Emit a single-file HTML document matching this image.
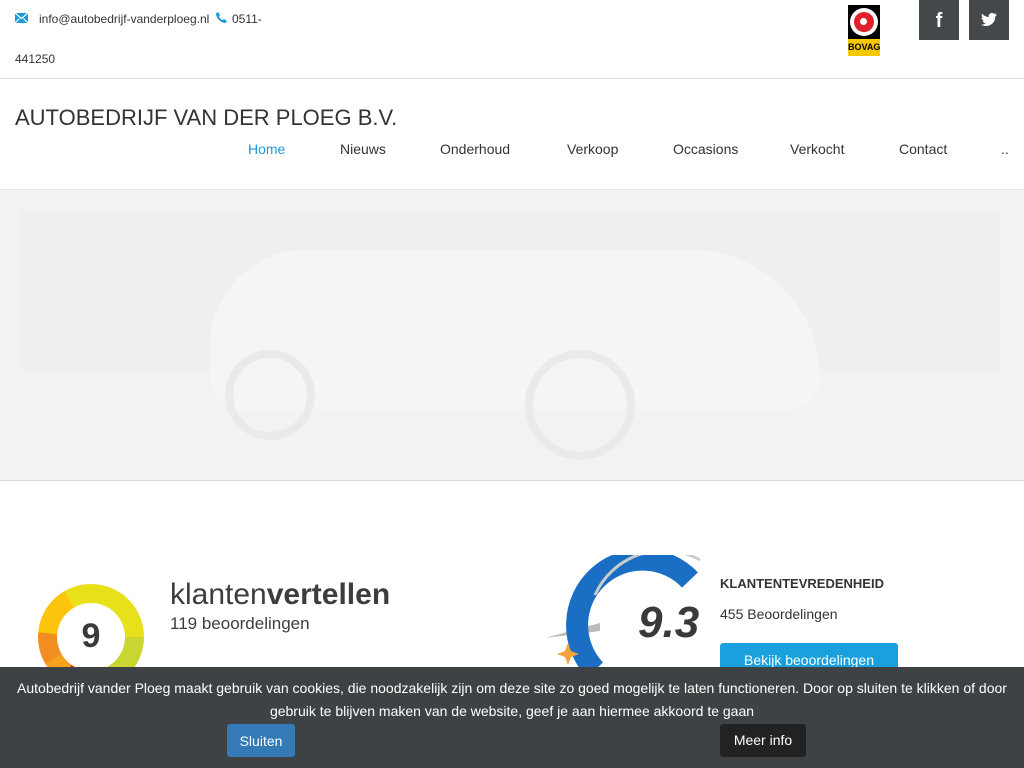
<!DOCTYPE html>
<html><head><meta charset="utf-8"><style>
*{margin:0;padding:0;box-sizing:border-box}
body{width:1024px;height:768px;overflow:hidden;background:#fff;font-family:"Liberation Sans",sans-serif;color:#333;position:relative}
.a{position:absolute}
.top{font-size:12px;color:#333}
.nav span{position:absolute;top:141px;font-size:14px;color:#333}
.soc{width:40px;height:40px;background:#45484b;top:0}
</style></head><body>
<svg class="a" style="left:15px;top:13px" width="13" height="10" viewBox="0 0 13 10"><rect width="13" height="10" fill="#1a9ad6"/><path d="M0 0l6.5 5.5L13 0M0 10l4.5-4.5M13 10L8.5 5.5" stroke="#fff" stroke-width="1.2" fill="none"/></svg>
<div class="a top" style="left:39px;top:12px">info@autobedrijf-vanderploeg.nl</div>
<svg class="a" style="left:215px;top:11px" width="13" height="13" viewBox="0 0 13 13"><path d="M3 1l2 3-1 1.5c.8 1.8 2 3 3.5 3.6L9 8l3 2-1.5 2C6 12 1 7 1 2.5z" fill="#1a9ad6"/></svg>
<div class="a top" style="left:232px;top:12px">0511-</div>
<div class="a top" style="left:15px;top:52px">441250</div>
<div class="a" style="left:848px;top:5px;width:32px;height:51px;background:#000"></div>
<div class="a" style="left:850px;top:8px;width:28px;height:28px;border-radius:50%;background:#fff"></div>
<div class="a" style="left:854px;top:12px;width:20px;height:20px;border-radius:50%;background:#e0202a"></div>
<div class="a" style="left:860px;top:18px;width:7px;height:7px;border-radius:50%;background:#fff"></div>
<div class="a" style="left:848px;top:39px;width:32px;height:17px;background:#f6c800;font:bold 9px 'Liberation Sans',sans-serif;color:#000;text-align:center;line-height:17px">BOVAG</div>
<div class="a soc" style="left:919px;color:#fff;font:bold 20px 'Liberation Sans',sans-serif;text-align:center;line-height:42px">f</div>
<div class="a soc" style="left:969px"><svg width="40" height="40" viewBox="0 0 40 40"><path d="M28 14.5c-.6.3-1.2.4-1.9.5.7-.4 1.2-1 1.4-1.8-.6.4-1.3.6-2.1.8a3.3 3.3 0 0 0-5.6 3C17.1 16.9 14.7 15.6 13.1 13.6c-.9 1.5-.4 3.4 1 4.4-.5 0-1-.2-1.5-.4 0 1.6 1.1 3 2.6 3.3-.5.1-1 .2-1.5.1.4 1.3 1.7 2.3 3.1 2.3A6.6 6.6 0 0 1 12 24.6c1.5.9 3.2 1.4 5 1.4 6.1 0 9.5-5.1 9.3-9.7.7-.5 1.2-1 1.7-1.8z" fill="#fff"/></svg></div>
<div class="a" style="left:0;top:78px;width:1024px;height:1px;background:#e2e2e2"></div>
<div class="a" style="left:15px;top:105px;font-size:22px;color:#333">AUTOBEDRIJF VAN DER PLOEG B.V.</div>
<div class="nav">
<span style="left:248px;color:#1a9ad6">Home</span><span style="left:340px">Nieuws</span><span style="left:440px">Onderhoud</span><span style="left:567px">Verkoop</span><span style="left:673px">Occasions</span><span style="left:790px">Verkocht</span><span style="left:899px">Contact</span><span style="left:1001px">..</span>
</div>
<div class="a" style="left:0;top:189px;width:1024px;height:292px;background:#f2f2f2;border-top:1px solid #e4e4e4;border-bottom:1px solid #ddd;overflow:hidden">
<div class="a" style="left:20px;top:20px;width:980px;height:160px;background:#efefef"></div>
<div class="a" style="left:210px;top:60px;width:610px;height:160px;border-radius:120px 160px 40px 40px;background:#f5f5f5"></div>
<div class="a" style="left:225px;top:160px;width:90px;height:90px;border-radius:50%;border:8px solid #eaeaea"></div>
<div class="a" style="left:525px;top:160px;width:110px;height:110px;border-radius:50%;border:8px solid #eaeaea"></div>
</div>
<div class="a" style="left:38px;top:584px;width:106px;height:106px;border-radius:50%;background:conic-gradient(#e8e01a 0 90deg,#c9d530 90deg 160deg,#e8e01a 160deg 180deg,#e93a24 180deg 215deg,#f6a21e 215deg 240deg,#f28d22 240deg 275deg,#fcc50c 275deg 330deg,#e8e01a 330deg)"></div>
<div class="a" style="left:57px;top:603px;width:68px;height:68px;border-radius:50%;background:#fff;text-align:center;font:bold 34px 'Liberation Sans',sans-serif;line-height:66px;color:#3a3a3a">9</div>
<div class="a" style="left:170px;top:578px;font:30px 'Liberation Sans',sans-serif;color:#3d3d3d">klanten<b>vertellen</b></div>
<div class="a" style="left:170px;top:614px;font:17px 'Liberation Sans',sans-serif;color:#3d3d3d">119 beoordelingen</div>
<svg class="a" style="left:540px;top:555px" width="175" height="115"><path d="M60 68 L5 83 L60 76z" fill="#bbb"/><path d="M55 115 A60 60 0 0 1 150 25" fill="none" stroke="#1a6fc4" stroke-width="22"/><path d="M160 5 A75 75 0 0 0 55 40" fill="none" stroke="#ccc" stroke-width="3"/><path d="M28 88l3 8 8 3-8 3-3 8-3-8-8-3 8-3z" fill="#f2a33a"/></svg>
<div class="a" style="left:638px;top:598px;font:italic bold 44px 'Liberation Sans',sans-serif;color:#3a3a3a">9.3</div>
<div class="a" style="left:720px;top:576px;font:bold 13px 'Liberation Sans',sans-serif;color:#333">KLANTENTEVREDENHEID</div>
<div class="a" style="left:720px;top:606px;font:14px 'Liberation Sans',sans-serif;color:#333">455 Beoordelingen</div>
<div class="a" style="left:720px;top:643px;width:178px;height:40px;background:#1aa0dc;border-radius:3px;color:#fff;font:14px 'Liberation Sans',sans-serif;text-align:center;line-height:34px">Bekijk beoordelingen</div>
<div class="a" style="left:0;top:667px;width:1024px;height:101px;background:#3e4245;color:#fff;font:14px 'Liberation Sans',sans-serif;text-align:center;line-height:23px;padding-top:10px">Autobedrijf vander Ploeg maakt gebruik van cookies, die noodzakelijk zijn om deze site zo goed mogelijk te laten functioneren. Door op sluiten te klikken of door<br>gebruik te blijven maken van de website, geef je aan hiermee akkoord te gaan</div>
<div class="a" style="left:227px;top:724px;width:68px;height:33px;background:#337ab7;border-radius:3px;color:#fff;font:14px 'Liberation Sans',sans-serif;text-align:center;line-height:35px">Sluiten</div>
<div class="a" style="left:720px;top:724px;width:86px;height:33px;background:#222;border-radius:3px;color:#fff;font:14px 'Liberation Sans',sans-serif;text-align:center;line-height:33px">Meer info</div>
</body></html>
